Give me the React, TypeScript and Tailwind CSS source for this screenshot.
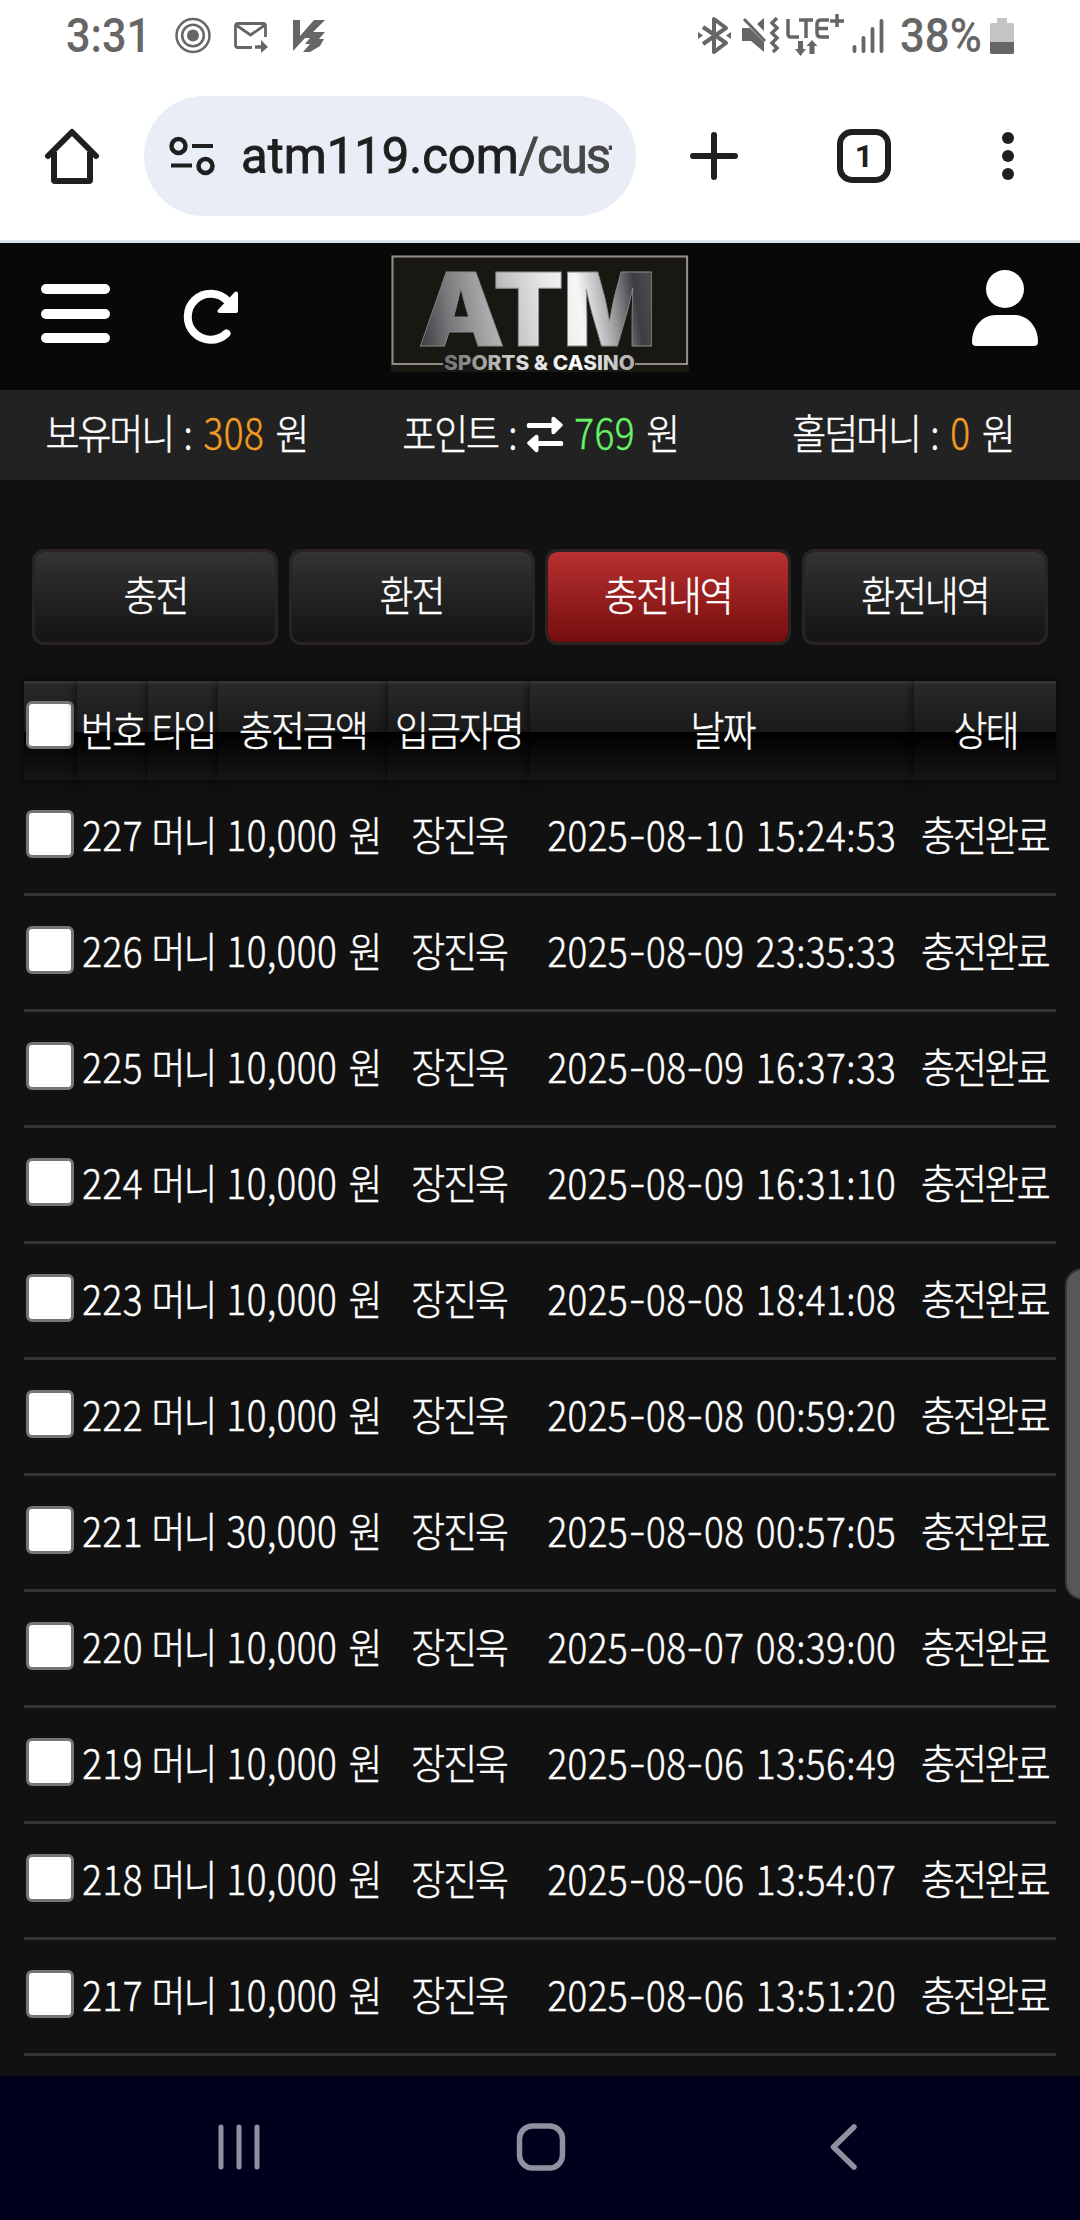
import React from 'react';

const rows = [
  { no: '227', amount: '10,000', date: '2025-08-10 15:24:53' },
  { no: '226', amount: '10,000', date: '2025-08-09 23:35:33' },
  { no: '225', amount: '10,000', date: '2025-08-09 16:37:33' },
  { no: '224', amount: '10,000', date: '2025-08-09 16:31:10' },
  { no: '223', amount: '10,000', date: '2025-08-08 18:41:08' },
  { no: '222', amount: '10,000', date: '2025-08-08 00:59:20' },
  { no: '221', amount: '30,000', date: '2025-08-08 00:57:05' },
  { no: '220', amount: '10,000', date: '2025-08-07 08:39:00' },
  { no: '219', amount: '10,000', date: '2025-08-06 13:56:49' },
  { no: '218', amount: '10,000', date: '2025-08-06 13:54:07' },
  { no: '217', amount: '10,000', date: '2025-08-06 13:51:20' },
];

const columns = ['번호', '타입', '충전금액', '입금자명', '날짜', '상태'];

const tabs = ['충전', '환전', '충전내역', '환전내역'];

const Ko: React.FC<{ children: React.ReactNode }> = ({ children }) => (
  <span className="tracking-[-2.3px]">{children}</span>
);

// Condensed text: the font is narrowed around its centre
const Text: React.FC<{ children: React.ReactNode }> = ({ children }) => (
  <span className="mb-[7px] inline-block scale-x-90 text-[41px] leading-none font-light tracking-[0.5px] whitespace-pre [word-spacing:3px] [-webkit-text-stroke:0.5px]">
    {children}
  </span>
);

const DateText: React.FC<{ value: string }> = ({ value }) => (
  <Text>
    {value.split('-').map((part, i) => (
      <React.Fragment key={i}>
        {i > 0 && <span className="mx-[2.8px] inline-block -translate-y-[2px] scale-x-[1.3]">-</span>}
        {part}
      </React.Fragment>
    ))}
  </Text>
);

const Checkbox: React.FC = () => (
  <span className="block size-12 rounded-md border-[3px] border-[#767676] bg-white" />
);

const StatusBar: React.FC = () => (
  <div className="flex h-[72px] items-center justify-between pr-[66px] pl-[66px] text-[#666666]">
    <div className="flex items-center">
      <span className="w-[81px] origin-left scale-x-[0.9] text-[48px] leading-none font-medium">3:31</span>
      <svg className="ml-7" width="170" height="44" viewBox="174 15 170 44" fill="none" stroke="#666666">
        <circle cx="192" cy="36.500" r="16.500" strokeWidth="2.500" />
        <circle cx="192" cy="36.500" r="10.800" strokeWidth="2.500" />
        <circle cx="192" cy="36.500" r="6" fill="#666666" stroke="none" />
        <path d="M251 48.500H237a2.500 2.500 0 0 1-2.500-2.500V27a2.500 2.500 0 0 1 2.500-2.500h25a2.500 2.500 0 0 1 2.500 2.500v11M235 26l14.500 10L264 26" strokeWidth="2.800" />
        <path d="M254 48h8" strokeWidth="3.500" />
        <path d="M260 41l7 7-7 6z" fill="#666666" stroke="none" />
        <path d="M292 21h7v16l14-16h11l-12 12h12l-6 7h5l-4 7-10 6h-7l7-8h-5l5-6h-5l-12 13z" fill="#666666" stroke="none" />
      </svg>
    </div>
    <div className="flex items-center">
      <svg className="mr-[15px]" width="190" height="46" viewBox="694 14 190 46" fill="none" stroke="#666666">
        <path d="M702 28l23 16-12 9V20l12 9-23 16" strokeWidth="4" strokeLinejoin="round" />
        <path d="M697 33l5 3.500-5 3.500zM730 33l-5 3.500 5 3.500z" fill="#666666" stroke="none" />
        <path d="M741 29h8l14 14v10l-13-11h-9zM763 19v13l-7-7z" fill="#666666" stroke="none" />
        <path d="M743 20l21 22" strokeWidth="3" />
        <path d="M776 19l-5 5 5 5-5 5 5 5-5 5 5 5-4 4" strokeWidth="3.500" />
        <path d="M787 20v15q0 3 3 3h8M798 21h14M805 21v18M828 21h-8q-4 0-4 4v9q0 4 4 4h8M816 29.500h11M829 22h14M836 15v13" strokeWidth="3.500" />
        <path d="M799.500 42v10M811 45v10" strokeWidth="5" />
        <path d="M794 50h11l-5.500 7zM805.500 47h11l-5.500-6z" fill="#666666" stroke="none" />
        <path d="M853.500 48v4M862.500 39v13M871.500 30v22M880.500 22v30" strokeWidth="3.800" strokeLinecap="round" />
      </svg>
      <span className="w-[81px] origin-left scale-x-[0.91] text-[48px] leading-none font-medium">38%</span>
      <svg className="ml-[9px]" width="24" height="36" viewBox="0 0 24 36">
        <path d="M0 36V7q0-2 2-2h5V0h10v5h5q2 0 2 2v29z" fill="#c4c4c4" />
        <path d="M0 24h24v10q0 2-2 2H2q-2 0-2-2z" fill="#666666" />
      </svg>
    </div>
  </div>
);

const BrowserBar: React.FC = () => (
  <div className="flex h-[168px] items-start pt-6">
    <div className="flex h-[120px] w-36 items-center">
      <svg className="-mt-[2px] ml-[43px]" width="58" height="58" viewBox="0 0 58 58" fill="none" stroke="#1f1f1f" strokeWidth="6">
        <path d="M5 30L29 6l24 24" strokeLinecap="round" strokeLinejoin="round" />
        <path d="M11 26v28a1 1 0 0 0 1 1h34a1 1 0 0 0 1-1V26" strokeLinejoin="round" />
      </svg>
    </div>
    <div className="flex h-[120px] w-[492px] items-center rounded-full bg-[#e8edf6]">
      <svg className="ml-[25px]" width="48" height="42" viewBox="0 0 48 42" fill="none" stroke="#1f1f1f">
        <circle cx="9.500" cy="11" r="7" strokeWidth="4.500" />
        <path d="M23 11h21M2 30.500h21" strokeWidth="4" />
        <circle cx="36.500" cy="31" r="7" strokeWidth="4.500" />
      </svg>
      <div className="ml-[24px] w-[371px] overflow-hidden">
        <span className="inline-block origin-left scale-x-[0.98] text-[50px] leading-[64px] whitespace-nowrap text-[#1f1f1f] [-webkit-text-stroke:0.9px]">
          atm119.com<span className="tracking-[-2px] text-[#474747]">/customer</span>
        </span>
      </div>
    </div>
    <div className="flex h-[120px] flex-1 items-center">
      <svg className="ml-[54px]" width="48" height="48" viewBox="0 0 48 48" stroke="#1f1f1f" strokeWidth="6" strokeLinecap="round">
        <path d="M24 3v42M3 24h42" />
      </svg>
      <div className="ml-[99px] flex size-[54px] items-center justify-center rounded-[15px] border-[6px] border-[#1f1f1f] text-[32px] leading-none font-bold text-[#1f1f1f]">
        1
      </div>
      <svg className="ml-[111px]" width="12" height="48" viewBox="0 0 12 48" fill="#1f1f1f">
        <circle cx="6" cy="6" r="6" />
        <circle cx="6" cy="24" r="6" />
        <circle cx="6" cy="42" r="6" />
      </svg>
    </div>
  </div>
);

const Logo: React.FC = () => (
  <svg width="298" height="117" viewBox="391 255 298 117">
    <defs>
      <linearGradient id="steel" gradientUnits="userSpaceOnUse" x1="420" y1="345" x2="652" y2="310">
        <stop offset="0" stopColor="#3c3b3f" />
        <stop offset="0.150" stopColor="#7c7c7f" />
        <stop offset="0.300" stopColor="#a9a9aa" />
        <stop offset="0.400" stopColor="#c2c2c2" />
        <stop offset="0.560" stopColor="#e8e8e8" />
        <stop offset="0.700" stopColor="#f6f6f6" />
        <stop offset="0.820" stopColor="#a8a8aa" />
        <stop offset="0.940" stopColor="#3e3d42" />
        <stop offset="1" stopColor="#4a494e" />
      </linearGradient>
      <linearGradient id="caption" x1="0" x2="1">
        <stop offset="0" stopColor="#6e6e70" />
        <stop offset="0.400" stopColor="#d8d8d8" />
        <stop offset="0.700" stopColor="#ffffff" />
        <stop offset="1" stopColor="#a8a8a8" />
      </linearGradient>
    </defs>
    <rect x="391" y="255" width="298" height="117" fill="#181712" />
    <path d="M443 364H392.500V256.500H687V364H635" fill="none" stroke="#8f8c89" strokeWidth="2" />
    <g fill="url(#steel)" stroke="#8a8a8c" strokeWidth="0.800" fontFamily="Inter, sans-serif" fontWeight="900" fontSize="102">
      <text x="418" y="346" textLength="87" lengthAdjust="spacingAndGlyphs">A</text>
      <text x="493" y="346" textLength="71" lengthAdjust="spacingAndGlyphs">T</text>
      <text x="563" y="346" textLength="93" lengthAdjust="spacingAndGlyphs">M</text>
    </g>
    <text x="444" y="370" textLength="191" lengthAdjust="spacingAndGlyphs" fill="url(#caption)" fontFamily="Inter, sans-serif" fontWeight="800" fontSize="19.500">
      SPORTS &amp; CASINO
    </text>
  </svg>
);

const SiteHeader: React.FC = () => (
  <div className="flex h-[147px] bg-[#080808]">
    <div className="flex w-[391px] items-start pt-[41px] pl-[41px]">
      <div className="flex flex-col gap-[14.5px]">
        <span className="h-[10px] w-[69px] rounded-[5px] bg-white" />
        <span className="h-[10px] w-[69px] rounded-[5px] bg-white" />
        <span className="h-[10px] w-[69px] rounded-[5px] bg-white" />
      </div>
      <svg className="mt-[5px] ml-[72px]" width="58" height="56" viewBox="0 0 58 56" fill="none">
        <path d="M45.500 12A23 23 0 1 0 44.500 44.500" stroke="#fff" strokeWidth="8" strokeLinecap="round" />
        <path d="M54 4.500V22H37.500z" fill="#fff" stroke="#fff" strokeWidth="4" strokeLinejoin="round" />
      </svg>
    </div>
    <div className="w-[298px] pt-3">
      <Logo />
    </div>
    <svg className="mt-[27px] ml-[283px]" width="66" height="77" viewBox="0 0 66 77" fill="#fff">
      <circle cx="33" cy="19" r="19" />
      <path d="M24 45h18c14 0 24 12 24 27q0 4-4 4H4q-4 0-4-4C0 57 10 45 24 45z" />
    </svg>
  </div>
);

const Balance: React.FC<{ label: string; value: string; color: string; swap?: boolean }> = ({ label, value, color, swap }) => (
  <div className="flex flex-1 justify-center">
    <Text>
      <Ko>{label}</Ko><span className="[word-spacing:2px]"> : </span>{swap && <SwapIcon />}
      <span className={color}>{value}</span> <Ko>원</Ko>
    </Text>
  </div>
);

const SwapIcon: React.FC = () => (
  <svg className="-mt-2 mr-[12px] -mb-1 -ml-[2px] inline-block align-[-1px]" width="41" height="38" viewBox="0 0 37 38" preserveAspectRatio="none" fill="#fff">
    <path d="M2 7h23V3q0-3 3-2l8 7q1 1 0 2l-8 8q-3 1-3-2v-4H2q-2 0-2-2.500t2-2.500z" />
    <path d="M35 25H12v-4q0-3-3-2l-8 7q-1 1 0 2l8 8q3 1 3-2v-4h23q2 0 2-2.500t-2-2.500z" />
  </svg>
);

const HistoryTable: React.FC = () => (
  <div className="mx-6 mt-9 text-white">
    <div className="grid h-[99px] grid-cols-[53px_71px_70px_170px_142px_384px_142px]">
      <div className="border-t-[3px] border-[#333333] bg-[linear-gradient(#282828,#1a1a1a_50%,#000_50%,#161616)] pt-[17px] pl-[2px] shadow-[0_0_9px_rgba(0,0,0,0.8)]">
        <Checkbox />
      </div>
      {columns.map((name) => (
        <div
          key={name}
          className="flex items-center justify-center border-t-[3px] border-[#333333] bg-[linear-gradient(#282828,#1a1a1a_50%,#000_50%,#161616)] shadow-[0_0_9px_rgba(0,0,0,0.8)]"
        >
          <Text><Ko>{name}</Ko></Text>
        </div>
      ))}
    </div>
    {rows.map((row) => (
      <div
        key={row.no}
        className="grid h-[116px] grid-cols-[53px_71px_70px_170px_142px_384px_142px] items-center justify-items-center border-b-[3px] border-[#333333]"
      >
        <div className="mb-[5px] ml-[2px] justify-self-start">
          <Checkbox />
        </div>
        <Text>{row.no}</Text>
        <Text><Ko>머니</Ko></Text>
        <Text>{row.amount} <Ko>원</Ko></Text>
        <Text><Ko>장진욱</Ko></Text>
        <DateText value={row.date} />
        <Text><Ko>충전완료</Ko></Text>
      </div>
    ))}
  </div>
);

const NavigationBar: React.FC = () => (
  <div className="h-36 bg-[#00001c]">
    <svg width="1080" height="144" viewBox="0 2076 1080 144" fill="none" stroke="#9190a0" strokeLinecap="round">
      <path d="M221 2127v40M239 2127v40M257 2127v40" strokeWidth="5" />
      <rect x="519.500" y="2126" width="43" height="42" rx="13" strokeWidth="5.500" />
      <path d="M854 2127l-20.500 20L854 2167" strokeWidth="5.500" strokeLinejoin="round" />
    </svg>
  </div>
);

const App: React.FC = () => {
  return (
    <div className="flex h-[2220px] w-[1080px] flex-col overflow-hidden bg-white font-[Roboto,'Noto_Sans_CJK_KR',sans-serif]">
      <StatusBar />
      <BrowserBar />
      <div className="h-[3px] bg-[#dae3e8]" />
      <div className="relative flex h-[1833px] flex-col overflow-hidden bg-[#111111] font-['Noto_Sans_CJK_KR',sans-serif]">
        <SiteHeader />
        <div className="-mx-[5px] flex h-[90px] items-center bg-[#222222] text-white">
          <Balance label="보유머니" value="308" color="text-[#f39c1f]" />
          <Balance label="포인트" value="769" color="text-[#66f566]" swap />
          <Balance label="홀덤머니" value="0" color="text-[#f39c1f]" />
        </div>
        <div className="mx-8 mt-[69px] grid h-24 grid-cols-4 gap-[10.67px] text-white">
          {tabs.map((tab) => (
            <button
              key={tab}
              className={
                tab === '충전내역'
                  ? 'flex items-center justify-center rounded-xl border-[3px] border-[#2b2323] bg-linear-to-b from-[#b83030] to-[#750d0d] bg-clip-padding'
                  : 'flex items-center justify-center rounded-xl border-[3px] border-[#2b2323] bg-linear-to-b from-[#333333] to-[#141414] bg-clip-padding'
              }
            >
              <Text><Ko>{tab}</Ko></Text>
            </button>
          ))}
        </div>
        <HistoryTable />
        <div className="absolute top-[1025px] -right-5 h-[332px] w-[35px] rounded-[20px] border-2 border-[#383838] bg-[#575757]" />
      </div>
      <NavigationBar />
    </div>
  );
};

export default App;
